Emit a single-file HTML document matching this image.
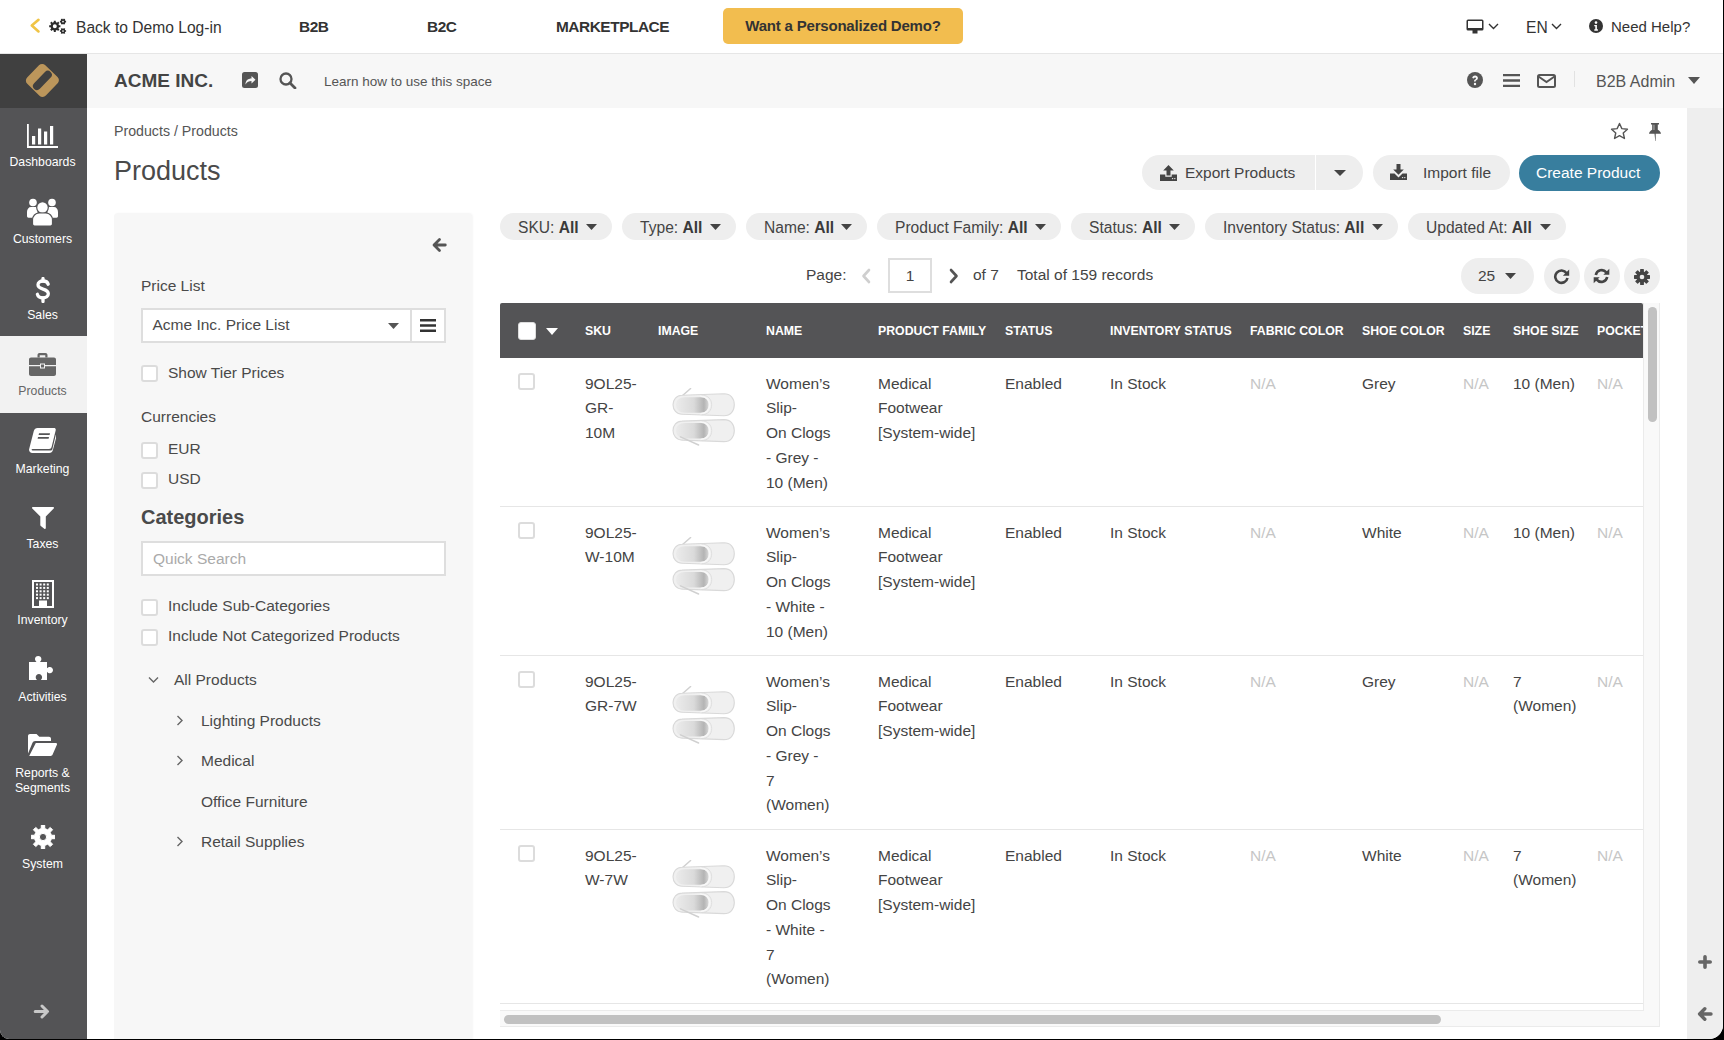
<!DOCTYPE html>
<html><head><meta charset="utf-8">
<style>
*{box-sizing:border-box;margin:0;padding:0}
html,body{width:1724px;height:1040px;overflow:hidden;background:#000;font-family:"Liberation Sans",sans-serif;color:#444}
#win{position:absolute;left:0;top:0;width:1723px;height:1039px;background:#fff;overflow:hidden;border-bottom-left-radius:9px;border-bottom-right-radius:14px}
.a{position:absolute;white-space:nowrap}
/* top bar */
#top{position:absolute;left:0;top:0;width:1723px;height:54px;background:#fff;border-bottom:1px solid #e6e6e6}
.tb{font-size:15.6px;color:#333;top:19px;line-height:18px}
.tbb{font-weight:bold;font-size:15.4px;letter-spacing:-0.45px;top:18px}
#demo{left:723px;top:8px;width:240px;height:36px;background:#f2bd4f;border-radius:5px;font-weight:bold;font-size:15px;letter-spacing:-0.2px;color:#333;text-align:center;line-height:36px}
/* sidebar */
#side{position:absolute;left:0;top:54px;width:87px;height:985px;background:#545456}
#logo{position:absolute;left:0;top:0;width:87px;height:54px;background:#404040}
.si{position:absolute;left:0;width:87px;height:76px;color:#fff;text-align:center;font-size:12.25px}
.si .lb{position:absolute;left:-1px;width:87px;text-align:center;line-height:14px}
.si svg{position:absolute}
.si.act{background:#f2f2f2;color:#666}
/* header2 */
#hdr{position:absolute;left:87px;top:54px;width:1636px;height:54px;background:#f7f7f7}

.bt{font-size:15.5px;color:#444;line-height:18px}
.ft{font-size:15.5px;color:#4a4a4a;line-height:18px}
.cb{width:17px;height:17px;border:2px solid #dcdcdc;border-radius:3px;background:#fff}

.pill{top:213px;height:27px;border-radius:14px;background:#eeeeee;font-size:15.6px;color:#444;line-height:27px;padding-left:18px}
.pill span{position:absolute;left:18px;top:1px}
.pill svg{position:absolute;right:15px;top:11px}
.pill b{color:#3a3a3a}
.circ{top:258px;width:35.5px;height:35.5px;border-radius:50%;background:#eeeeee}

.th{top:21px;font-size:12.3px;font-weight:bold;color:#fff;line-height:14px}
.tr{left:0;width:1143px;border-bottom:1.5px solid #e6e6e6}
.td{top:13.5px;font-size:15.5px;line-height:24.75px;color:#444}
.na{color:#c6c6c6}
</style></head>
<body>
<div id="win"><svg width="0" height="0" style="position:absolute"><defs>
<linearGradient id="op" x1="0" y1="0" x2="1" y2="0"><stop offset="0" stop-color="#ebebeb"/><stop offset=".55" stop-color="#dadada"/><stop offset=".86" stop-color="#b4b4b4"/><stop offset="1" stop-color="#d6d6d6"/></linearGradient>
<filter id="bl" x="-10%" y="-10%" width="120%" height="120%"><feGaussianBlur stdDeviation="0.5"/></filter>
<g id="sh"><path d="M10 1.5L52 0c6.5 0 10.3 4.5 10.3 11S58.5 22 52 22L10 20.5C4.5 20.5 1 16 1 11S4.5 1.5 10 1.5z" fill="#f0f0f0" stroke="#d9d9d9" stroke-width="1.1"/><path d="M4 11c0-4.5 3.5-7.5 9-7.5h16c5 0 7.5 3.5 7.5 7.5 0 4.5-2.5 8-7.5 8H13c-5.5 0-9-3.5-9-8z" fill="url(#op)"/><path d="M28.5 2.5c5.7 0 9.2 3.8 9.2 8.5s-3.5 8.9-9.2 8.9" fill="none" stroke="#f8f8f8" stroke-width="1.5"/><path d="M29.5 1.2c6.5 0 10.2 4.4 10.2 9.8s-3.7 10-10.2 10" fill="none" stroke="#dadada" stroke-width=".8"/></g>
<g id="shoes" filter="url(#bl)"><path d="M5.8 11.8L18.6 .5" stroke="#d0d0d0" stroke-width="1.5" stroke-linecap="round"/><use href="#sh" x="0" y="5.8"/><use href="#sh" x="0" y="31.6"/><path d="M8.5 48.9L26.6 57" stroke="#d0d0d0" stroke-width="1.5" stroke-linecap="round"/></g>
</defs></svg>
<div id="top">
  <svg class="a" style="left:29px;top:17px" width="12" height="17" viewBox="0 0 12 17"><path d="M9.5 2.8L2.8 8.6l6.7 5.8" fill="none" stroke="#f0c445" stroke-width="2.6" stroke-linecap="round" stroke-linejoin="round"/></svg>
  <svg class="a" style="left:49px;top:18px" width="18" height="17" viewBox="0 0 18 17"><path fill-rule="evenodd" fill="#2b2b2b" d="M9.99 7.31 L11.41 7.30 L11.41 9.30 L9.99 9.29 L9.46 10.56 L10.48 11.56 L9.06 12.98 L8.06 11.96 L6.79 12.49 L6.80 13.91 L4.80 13.91 L4.81 12.49 L3.54 11.96 L2.54 12.98 L1.12 11.56 L2.14 10.56 L1.61 9.29 L0.19 9.30 L0.19 7.30 L1.61 7.31 L2.14 6.04 L1.12 5.04 L2.54 3.62 L3.54 4.64 L4.81 4.11 L4.80 2.69 L6.80 2.69 L6.79 4.11 L8.06 4.64 L9.06 3.62 L10.48 5.04 L9.46 6.04ZM7.80 8.30A2.0 2.0 0 1 0 3.80 8.30A2.0 2.0 0 1 0 7.80 8.30ZM16.27 2.81 L17.09 2.77 L17.09 4.43 L16.27 4.39 L15.82 5.17 L16.26 5.86 L14.83 6.69 L14.45 5.96 L13.55 5.96 L13.17 6.69 L11.74 5.86 L12.18 5.17 L11.73 4.39 L10.91 4.43 L10.91 2.77 L11.73 2.81 L12.18 2.03 L11.74 1.34 L13.17 0.51 L13.55 1.24 L14.45 1.24 L14.83 0.51 L16.26 1.34 L15.82 2.03ZM14.85 3.60A0.85 0.85 0 1 0 13.15 3.60A0.85 0.85 0 1 0 14.85 3.60ZM16.27 12.21 L17.09 12.17 L17.09 13.83 L16.27 13.79 L15.82 14.57 L16.26 15.26 L14.83 16.09 L14.45 15.36 L13.55 15.36 L13.17 16.09 L11.74 15.26 L12.18 14.57 L11.73 13.79 L10.91 13.83 L10.91 12.17 L11.73 12.21 L12.18 11.43 L11.74 10.74 L13.17 9.91 L13.55 10.64 L14.45 10.64 L14.83 9.91 L16.26 10.74 L15.82 11.43ZM14.85 13.00A0.85 0.85 0 1 0 13.15 13.00A0.85 0.85 0 1 0 14.85 13.00Z"/></svg>
  <div class="a tb" style="left:76px">Back to Demo Log-in</div>
  <div class="a tb tbb" style="left:299px">B2B</div>
  <div class="a tb tbb" style="left:427px">B2C</div>
  <div class="a tb tbb" style="left:556px">MARKETPLACE</div>
  <div class="a" id="demo">Want a Personalized Demo?</div>
  <svg class="a" style="left:1466px;top:19px" width="18" height="15" viewBox="0 0 18 15"><rect x="0.5" y="0.5" width="17" height="11" rx="1.5" fill="#333"/><rect x="2" y="2" width="14" height="7" fill="#fff"/><rect x="6.5" y="11" width="5" height="3.5" fill="#333"/></svg>
  <svg class="a" style="left:1488px;top:23px" width="11" height="7" viewBox="0 0 11 7"><path d="M1 1l4.5 4.5L10 1" fill="none" stroke="#333" stroke-width="1.4"/></svg>
  <div class="a tb" style="left:1526px">EN</div>
  <svg class="a" style="left:1551px;top:23px" width="11" height="7" viewBox="0 0 11 7"><path d="M1 1l4.5 4.5L10 1" fill="none" stroke="#333" stroke-width="1.4"/></svg>
  <svg class="a" style="left:1589px;top:19px" width="14" height="14" viewBox="0 0 14 14"><circle cx="7" cy="7" r="7" fill="#333"/><circle cx="7" cy="3.6" r="1.3" fill="#fff"/><path d="M5.3 6h2.6v4.3h1v1.4H5.3v-1.4h1V7.3h-1z" fill="#fff"/></svg>
  <div class="a tb" style="left:1611px;font-size:15px;top:18px">Need Help?</div>
</div>

<div id="side">
  <div id="logo">
    <svg class="a" style="left:20px;top:4px" width="46" height="46" viewBox="0 0 46 46"><g transform="rotate(44 22.4 22.4)"><rect x="9.4" y="9.4" width="26" height="26" rx="4.5" fill="#bc965b"/><rect x="18.4" y="10.6" width="8" height="23.6" rx="4" fill="#404040"/></g></svg>
  </div>
  <div class="si" style="top:54px">
    <svg style="left:27px;top:16px" width="31" height="24" viewBox="0 0 31 24"><g fill="#fff"><rect x="0" y="0" width="1.8" height="24"/><rect x="0" y="22" width="31" height="2"/><rect x="5" y="12" width="3.2" height="8.5"/><rect x="11" y="4.5" width="3.2" height="16"/><rect x="17" y="7.5" width="3.2" height="13"/><rect x="23" y="2" width="3.2" height="18.5"/></g></svg>
    <div class="lb" style="top:47px">Dashboards</div>
  </div>
  <div class="si" style="top:130px">
    <svg style="left:27px;top:14px" width="31" height="28" viewBox="0 0 31 28"><g fill="#fff"><circle cx="6" cy="4.5" r="3.8"/><circle cx="25" cy="4.5" r="3.8"/><path d="M0 14c0-3 1.8-5 4-5h4c1 0 2 .5 2.5 1.2v9.5H1.5C.6 19.7 0 19 0 18z"/><path d="M31 14c0-3-1.8-5-4-5h-4c-1 0-2 .5-2.5 1.2v9.5h9c.9 0 1.5-.7 1.5-1.7z"/><circle cx="15.5" cy="9.5" r="5.8" fill="#fff" stroke="#545456" stroke-width="1.2"/><path d="M5.5 26v-4c0-4 3-7 6.5-7h7c3.5 0 6.5 3 6.5 7v4c0 1-.8 2-2 2h-16c-1.2 0-2-1-2-2z" stroke="#545456" stroke-width="1.2"/></g></svg>
    <div class="lb" style="top:48px">Customers</div>
  </div>
  <div class="si" style="top:206px">
    <svg style="left:35px;top:17px" width="16" height="26" viewBox="0 0 16 26"><g fill="none" stroke="#fff" stroke-width="3.3" stroke-linecap="round"><path d="M13.2 7.2C12.6 5 10.6 4 8 4 5.1 4 3 5.5 3 7.8c0 2.6 2.3 3.5 5 4.3 3 .9 5.3 1.8 5.3 4.7 0 2.5-2.2 4-5.3 4-2.9 0-5-1.2-5.6-3.5"/><path d="M8 1.5v2.5M8 21v3.5"/></g></svg>
    <div class="lb" style="top:48px">Sales</div>
  </div>
  <div class="si act" style="top:282px;height:77px">
    <svg style="left:29px;top:17px" width="27" height="23" viewBox="0 0 27 23"><g fill="#666"><path d="M8.5 4.5V2c0-1.1.9-2 2-2h6c1.1 0 2 .9 2 2v2.5h-2.2V2.2h-5.6v2.3z"/><path d="M0 6.5c0-1.1.9-2 2-2h23c1.1 0 2 .9 2 2v5.5H16v-1.5h-5V12H0z"/><path d="M0 13.2h11v2.3h5v-2.3h11V21c0 1.1-.9 2-2 2H2c-1.1 0-2-.9-2-2z"/><rect x="12" y="11.5" width="3" height="3"/></g></svg>
    <div class="lb" style="top:48px">Products</div>
  </div>
  <div class="si" style="top:359px">
    <svg style="left:29px;top:15px" width="27" height="25" viewBox="0 0 27 25"><path fill="#fff" fill-rule="evenodd" d="M8.5 0H25c1.3 0 2 .9 1.7 2.2L22.6 19c-.3 1.2-1.3 2-2.5 2H3.5c-1 0-1.2.9-.5 1.3.3.2.6.3 1 .3h17.5c.8 0 1.5-.5 1.8-1.2l3.5-14.5.9.6L23.9 22c-.4 1.8-1.9 3-3.7 3H3.2C1.3 25-.3 23.4.1 21.2L4.8 3C5.3 1.2 6.8 0 8.5 0zM10 5.3l-.4 1.6h11l.4-1.6zm-1 3.8l-.4 1.6h11l.4-1.6z"/></svg>
    <div class="lb" style="top:49px">Marketing</div>
  </div>
  <div class="si" style="top:435px">
    <svg style="left:32px;top:18px" width="22" height="22" viewBox="0 0 22 22"><path d="M1 0h20c.9 0 1.3 1 .7 1.6L13.8 9.6V21c0 .8-.9 1.2-1.5.7l-3.5-2.8c-.3-.2-.5-.6-.5-1V9.6L.3 1.6C-.3 1 .1 0 1 0z" fill="#fff"/></svg>
    <div class="lb" style="top:48px">Taxes</div>
  </div>
  <div class="si" style="top:511px">
    <svg style="left:32px;top:15px" width="22" height="28" viewBox="0 0 22 28"><g fill="#fff"><path fill-rule="evenodd" d="M0 0h22v28H0zM2 2v24h18V2z"/><rect x="4.0" y="3.5" width="2" height="2"/><rect x="7.6" y="3.5" width="2" height="2"/><rect x="11.2" y="3.5" width="2" height="2"/><rect x="14.8" y="3.5" width="2" height="2"/><rect x="4.0" y="6.9" width="2" height="2"/><rect x="7.6" y="6.9" width="2" height="2"/><rect x="11.2" y="6.9" width="2" height="2"/><rect x="14.8" y="6.9" width="2" height="2"/><rect x="4.0" y="10.3" width="2" height="2"/><rect x="7.6" y="10.3" width="2" height="2"/><rect x="11.2" y="10.3" width="2" height="2"/><rect x="14.8" y="10.3" width="2" height="2"/><rect x="4.0" y="13.7" width="2" height="2"/><rect x="7.6" y="13.7" width="2" height="2"/><rect x="11.2" y="13.7" width="2" height="2"/><rect x="14.8" y="13.7" width="2" height="2"/><rect x="4.0" y="17.1" width="2" height="2"/><rect x="7.6" y="17.1" width="2" height="2"/><rect x="11.2" y="17.1" width="2" height="2"/><rect x="14.8" y="17.1" width="2" height="2"/><rect x="7" y="20.5" width="8" height="6"/></g></svg>
    <div class="lb" style="top:48px">Inventory</div>
  </div>
  <div class="si" style="top:588px">
    <svg style="left:29px;top:14px" width="27" height="24" viewBox="0 0 27 24"><path fill="#fff" d="M0 6h7.5c-1-.9-1.5-1.8-1.5-2.9C6 1.3 7.4 0 9.2 0s3.2 1.3 3.2 3.1c0 1.1-.5 2-1.5 2.9H18v6.3c.9-1 1.8-1.4 2.9-1.4 1.8 0 3.1 1.4 3.1 3.2s-1.3 3.2-3.1 3.2c-1.1 0-2-.5-2.9-1.5V24h-6.2c.9-.9 1.3-1.8 1.3-2.8 0-1.8-1.4-3.2-3.2-3.2S6.7 19.4 6.7 21.2c0 1 .4 1.9 1.3 2.8H0z"/></svg>
    <div class="lb" style="top:48px">Activities</div>
  </div>
  <div class="si" style="top:664px;height:91px">
    <svg style="left:28px;top:16px" width="29" height="22" viewBox="0 0 29 22"><g fill="#fff"><path d="M0 2C0 .9.9 0 2 0h6.5l2.8 2.8H21c1.1 0 2 .9 2 2V7H7.2c-1.3 0-2.4.8-2.8 2L0 19.5z"/><path d="M7.8 9H28c.8 0 1.3.8 1 1.5L24.5 20.8c-.3.7-1 1.2-1.8 1.2H1.2z"/></g></svg>
    <div class="lb" style="top:48px;line-height:15px">Reports &amp;<br>Segments</div>
  </div>
  <div class="si" style="top:755px">
    <svg style="left:31px;top:16px" width="24" height="24" viewBox="0 0 24 24"><path fill="#fff" fill-rule="evenodd" stroke="#fff" stroke-width="1" stroke-linejoin="round" d="M20.42 10.26 L23.88 10.31 L23.88 13.69 L20.42 13.74 L19.19 16.72 L21.60 19.21 L19.21 21.60 L16.72 19.19 L13.74 20.42 L13.69 23.88 L10.31 23.88 L10.26 20.42 L7.28 19.19 L4.79 21.60 L2.40 19.21 L4.81 16.72 L3.58 13.74 L0.12 13.69 L0.12 10.31 L3.58 10.26 L4.81 7.28 L2.40 4.79 L4.79 2.40 L7.28 4.81 L10.26 3.58 L10.31 0.12 L13.69 0.12 L13.74 3.58 L16.72 4.81 L19.21 2.40 L21.60 4.79 L19.19 7.28ZM15.60 12.00A3.6 3.6 0 1 0 8.40 12.00A3.6 3.6 0 1 0 15.60 12.00Z"/></svg>
    <div class="lb" style="top:48px">System</div>
  </div>
  <svg class="a" style="left:33px;top:949px" width="17" height="17" viewBox="0 0 17 17"><path d="M2.2 8.5h12M9 3l5.5 5.5L9 14" fill="none" stroke="#c8c8c8" stroke-width="3" stroke-linecap="round" stroke-linejoin="round"/></svg>
</div>

<div id="hdr">
  <div class="a" style="left:27px;top:16px;font-size:19px;font-weight:bold;color:#444;line-height:22px">ACME INC.</div>
  <svg class="a" style="left:155px;top:18px" width="16" height="16" viewBox="0 0 16 16"><rect x="0" y="0" width="16" height="16" rx="2.5" fill="#555"/><path d="M3.5 12.5c0-4 2.5-6 6-6V4l4 3.8-4 3.8V9c-2.5 0-4.5.8-6 3.5z" fill="#f7f7f7"/></svg>
  <svg class="a" style="left:192px;top:18px" width="18" height="17" viewBox="0 0 18 17"><circle cx="7" cy="7" r="5.5" fill="none" stroke="#555" stroke-width="2.3"/><path d="M11 11l5 5" stroke="#555" stroke-width="2.8" stroke-linecap="round"/></svg>
  
  <svg class="a" style="left:1380px;top:18px" width="16" height="16" viewBox="0 0 16 16"><circle cx="8" cy="8" r="8" fill="#555"/><path d="M5.3 6.1c0-1.6 1.2-2.6 2.8-2.6 1.6 0 2.8 1 2.8 2.4 0 1.3-.8 1.8-1.6 2.3-.5.3-.6.5-.6 1v.4H7V9.3c0-.9.4-1.4 1.1-1.8.6-.4.9-.6.9-1.2 0-.5-.4-.9-1-.9-.6 0-1 .4-1.1 1z" fill="#f7f7f7"/><circle cx="8" cy="12" r="1.2" fill="#f7f7f7"/></svg>
  <svg class="a" style="left:1416px;top:20px" width="17" height="13" viewBox="0 0 17 13"><path d="M0 1.2h17M0 6.5h17M0 11.8h17" stroke="#555" stroke-width="2.3"/></svg>
  <svg class="a" style="left:1450px;top:20px" width="19" height="14" viewBox="0 0 19 14"><rect x="1" y="1" width="17" height="12" rx="1.5" fill="none" stroke="#555" stroke-width="2"/><path d="M1.5 2.5l8 5.5 8-5.5" fill="none" stroke="#555" stroke-width="2"/></svg>
  <div class="a" style="left:1487px;top:17px;width:1px;height:16px;background:#e2e2e2"></div>
  <div class="a" style="left:1509px;top:19px;font-size:16px;color:#555;line-height:18px">B2B Admin</div>
  <svg class="a" style="left:1601px;top:23px" width="12" height="7" viewBox="0 0 12 7"><path d="M0 0h12L6 7z" fill="#555"/></svg>
<div class="a" style="left:237px;top:20px;font-size:13.5px;color:#555;line-height:16px">Learn how to use this space</div>
</div>

<div id="rpanel" class="a" style="left:1687px;top:108px;width:36px;height:931px;background:#eeeeee">
  <svg class="a" style="left:11px;top:847px" width="14" height="14" viewBox="0 0 14 14"><path d="M7 1.8v10.4M1.8 7h10.4" stroke="#666" stroke-width="3.6" stroke-linecap="round"/></svg>
  <svg class="a" style="left:10px;top:898px" width="16" height="16" viewBox="0 0 16 16"><path d="M14 8H3M7.8 2.8L2.6 8l5.2 5.2" fill="none" stroke="#666" stroke-width="3.4" stroke-linecap="round" stroke-linejoin="round"/></svg>
</div>
<div class="a" style="left:114px;top:123px;font-size:14.2px;color:#555;line-height:16px">Products / Products</div>
<div class="a" style="left:114px;top:155.5px;font-size:27px;color:#4a4a4a;line-height:30px">Products</div>
<svg class="a" style="left:1610px;top:122px" width="19" height="19" viewBox="0 0 19 19"><path d="M9.5 1.5l2.35 5.1 5.6.6-4.2 3.8 1.2 5.5-4.95-2.85-4.95 2.85 1.2-5.5-4.2-3.8 5.6-.6z" fill="none" stroke="#555" stroke-width="1.4" stroke-linejoin="round"/></svg>
<svg class="a" style="left:1648px;top:123px" width="14" height="18" viewBox="0 0 14 18"><path d="M3 0h8v1.6H9.8v5.2c1.8.8 3 2.2 3.2 4H7.7V18h-.4l-.8-7.2H1c.2-1.8 1.4-3.2 3.2-4V1.6H3z" fill="#555"/><path d="M5.4 1.8h1.1v5.2H5.4z" fill="#fff" opacity=".5"/></svg>

<div class="btn a" style="left:1142px;top:155px;width:221px;height:35px;border-radius:18px;background:#eeeeee"></div>
<div class="a" style="left:1315px;top:155px;width:1px;height:35px;background:#fff"></div>
<svg class="a" style="left:1160px;top:165px" width="17" height="16" viewBox="0 0 17 16"><path d="M8.5 0L3.2 5.4h3.3v5.2h4V5.4h3.3z" fill="#444"/><path d="M0 9.5h5.3v2.2h6.4V9.5H17V16H0z" fill="#444"/><circle cx="12.6" cy="13.6" r=".7" fill="#eee"/><circle cx="14.8" cy="13.6" r=".7" fill="#eee"/></svg>
<div class="a bt" style="left:1185px;top:164px">Export Products</div>
<svg class="a" style="left:1334px;top:170px" width="12" height="6" viewBox="0 0 12 6"><path d="M0 0h12L6 6z" fill="#444"/></svg>
<div class="btn a" style="left:1373px;top:155px;width:137px;height:35px;border-radius:18px;background:#eeeeee"></div>
<svg class="a" style="left:1390px;top:164px" width="17" height="16" viewBox="0 0 17 16"><path d="M6.5 0h4v5.4h3.3L8.5 10.8 3.2 5.4h3.3z" fill="#444"/><path d="M0 9.5h4.5l4 4 4-4H17V16H0z" fill="#444"/><circle cx="12.6" cy="13.6" r=".7" fill="#eee"/><circle cx="14.8" cy="13.6" r=".7" fill="#eee"/></svg>
<div class="a bt" style="left:1423px;top:164px">Import file</div>
<div class="a" style="left:1519px;top:155px;width:141px;height:35.5px;border-radius:18px;background:#387e9e"></div>
<div class="a bt" style="left:1536px;top:164px;color:#fff">Create Product</div>

<div id="fpanel" class="a" style="left:114px;top:213px;width:358px;height:830px;background:#f7f7f7;border-radius:4px 4px 0 0;box-shadow:1px 0 2px rgba(0,0,0,.04)">
  <svg class="a" style="left:318px;top:24px" width="15" height="16" viewBox="0 0 15 16"><path d="M13.3 8H2.5M7.5 2.5L2 8l5.5 5.5" fill="none" stroke="#555" stroke-width="2.8" stroke-linecap="round" stroke-linejoin="round"/></svg>
  <div class="a ft" style="left:27px;top:64px">Price List</div>
  <div class="a" style="left:27px;top:95px;width:305px;height:35px;background:#fff;border:2px solid #dedede"></div>
  <div class="a" style="left:296px;top:95px;width:2px;height:35px;background:#dedede"></div>
  <div class="a ft" style="left:38.5px;top:103px">Acme Inc. Price List</div>
  <svg class="a" style="left:274px;top:110px" width="11" height="6" viewBox="0 0 11 6"><path d="M0 0h11L5.5 6z" fill="#555"/></svg>
  <svg class="a" style="left:306px;top:106px" width="16" height="13" viewBox="0 0 16 13"><path d="M0 1.2h16M0 6.5h16M0 11.8h16" stroke="#333" stroke-width="2.4"/></svg>
  <div class="cb a" style="left:27px;top:152px"></div>
  <div class="a ft" style="left:54px;top:151px">Show Tier Prices</div>
  <div class="a ft" style="left:27px;top:195px">Currencies</div>
  <div class="cb a" style="left:27px;top:229px"></div>
  <div class="a ft" style="left:54px;top:227px">EUR</div>
  <div class="cb a" style="left:27px;top:259px"></div>
  <div class="a ft" style="left:54px;top:257px">USD</div>
  <div class="a" style="left:27px;top:292px;font-size:20px;font-weight:bold;color:#4a4a4a;line-height:24px">Categories</div>
  <div class="a" style="left:27px;top:328px;width:305px;height:35px;background:#fff;border:2px solid #dedede"></div>
  <div class="a ft" style="left:39px;top:337px;color:#aaa">Quick Search</div>
  <div class="cb a" style="left:27px;top:386px"></div>
  <div class="a ft" style="left:54px;top:384px">Include Sub-Categories</div>
  <div class="cb a" style="left:27px;top:416px"></div>
  <div class="a ft" style="left:54px;top:414px">Include Not Categorized Products</div>
  <svg class="a" style="left:34px;top:463px" width="11" height="8" viewBox="0 0 11 8"><path d="M1 1.5l4.5 4.5L10 1.5" fill="none" stroke="#666" stroke-width="1.4"/></svg>
  <div class="a ft" style="left:60px;top:458px">All Products</div>
  <svg class="a" style="left:62px;top:502px" width="8" height="11" viewBox="0 0 8 11"><path d="M1.5 1l4.5 4.5L1.5 10" fill="none" stroke="#666" stroke-width="1.4"/></svg>
  <div class="a ft" style="left:87px;top:499px">Lighting Products</div>
  <svg class="a" style="left:62px;top:542px" width="8" height="11" viewBox="0 0 8 11"><path d="M1.5 1l4.5 4.5L1.5 10" fill="none" stroke="#666" stroke-width="1.4"/></svg>
  <div class="a ft" style="left:87px;top:539px">Medical</div>
  <div class="a ft" style="left:87px;top:580px">Office Furniture</div>
  <svg class="a" style="left:62px;top:623px" width="8" height="11" viewBox="0 0 8 11"><path d="M1.5 1l4.5 4.5L1.5 10" fill="none" stroke="#666" stroke-width="1.4"/></svg>
  <div class="a ft" style="left:87px;top:620px">Retail Supplies</div>
</div>
<div class="pill a" style="left:500px;width:112px"><span>SKU: <b>All</b></span><svg width="11" height="6" viewBox="0 0 11 6"><path d="M0 0h11L5.5 6z" fill="#444"/></svg></div>
<div class="pill a" style="left:622px;width:114px"><span>Type: <b>All</b></span><svg width="11" height="6" viewBox="0 0 11 6"><path d="M0 0h11L5.5 6z" fill="#444"/></svg></div>
<div class="pill a" style="left:746px;width:121px"><span>Name: <b>All</b></span><svg width="11" height="6" viewBox="0 0 11 6"><path d="M0 0h11L5.5 6z" fill="#444"/></svg></div>
<div class="pill a" style="left:877px;width:184px"><span>Product Family: <b>All</b></span><svg width="11" height="6" viewBox="0 0 11 6"><path d="M0 0h11L5.5 6z" fill="#444"/></svg></div>
<div class="pill a" style="left:1071px;width:124px"><span>Status: <b>All</b></span><svg width="11" height="6" viewBox="0 0 11 6"><path d="M0 0h11L5.5 6z" fill="#444"/></svg></div>
<div class="pill a" style="left:1205px;width:193px"><span>Inventory Status: <b>All</b></span><svg width="11" height="6" viewBox="0 0 11 6"><path d="M0 0h11L5.5 6z" fill="#444"/></svg></div>
<div class="pill a" style="left:1408px;width:158px"><span>Updated At: <b>All</b></span><svg width="11" height="6" viewBox="0 0 11 6"><path d="M0 0h11L5.5 6z" fill="#444"/></svg></div>

<div class="a bt" style="left:806px;top:265.5px">Page:</div>
<svg class="a" style="left:860px;top:268px" width="12" height="16" viewBox="0 0 12 16"><path d="M9 2L3.5 8 9 14" fill="none" stroke="#cfcfcf" stroke-width="2.6" stroke-linecap="round" stroke-linejoin="round"/></svg>
<div class="a" style="left:888px;top:258px;width:44px;height:35px;border:2px solid #dedede;background:#fff;text-align:center;font-size:15.5px;line-height:31px;color:#444">1</div>
<svg class="a" style="left:948px;top:268px" width="12" height="16" viewBox="0 0 12 16"><path d="M3 2l5.5 6L3 14" fill="none" stroke="#555" stroke-width="2.6" stroke-linecap="round" stroke-linejoin="round"/></svg>
<div class="a bt" style="left:973px;top:265.5px">of 7</div>
<div class="a bt" style="left:1017px;top:266px">Total of 159 records</div>
<div class="a" style="left:1461px;top:258px;width:73px;height:35.5px;border-radius:18px;background:#eeeeee"></div>
<div class="a bt" style="left:1478px;top:267px">25</div>
<svg class="a" style="left:1505px;top:273px" width="11" height="6" viewBox="0 0 11 6"><path d="M0 0h11L5.5 6z" fill="#444"/></svg>
<div class="circ a" style="left:1544px"></div>
<div class="circ a" style="left:1584px"></div>
<div class="circ a" style="left:1624px"></div>
<svg class="a" style="left:1553px;top:268px" width="17" height="17" viewBox="0 0 17 17"><path d="M13.6 5.2A6.2 6.2 0 1 0 14.5 10" fill="none" stroke="#444" stroke-width="2.6"/><path d="M16.2 1.5v6.3H9.9z" fill="#444"/></svg>
<svg class="a" style="left:1593px;top:268px" width="17" height="16" viewBox="0 0 17 16"><path d="M2.8 7A6 6 0 0 1 13.3 4.3M14.2 9A6 6 0 0 1 3.7 11.7" fill="none" stroke="#444" stroke-width="2.6"/><path d="M16.3 0.7v6H10.3z" fill="#444"/><path d="M0.7 15.3v-6h6z" fill="#444"/></svg>
<svg class="a" style="left:1634px;top:269px" width="16" height="16" viewBox="-8 -8 16 16"><g fill="#444"><circle r="5.6"/><g id="gt"><rect x="-1.9" y="-8" width="3.8" height="4" rx=".6"/></g><use href="#gt" transform="rotate(45)"/><use href="#gt" transform="rotate(90)"/><use href="#gt" transform="rotate(135)"/><use href="#gt" transform="rotate(180)"/><use href="#gt" transform="rotate(225)"/><use href="#gt" transform="rotate(270)"/><use href="#gt" transform="rotate(315)"/></g><circle r="2.3" fill="#eee"/></svg>
<div id="grid" class="a" style="left:500px;top:303px;width:1160px;height:724px;overflow:hidden;background:#f9f9f9;border-right:1px solid #ebebeb;border-bottom:1px solid #ebebeb">
<div class="a" style="left:0;top:0;width:1144px;height:708px;background:#fff;border-right:1px solid #ebebeb;border-bottom:1px solid #ebebeb"></div>
<div class="a" style="left:1148px;top:4px;width:9px;height:115px;border-radius:5px;background:#c1c1c1"></div>
<div class="a" style="left:3.5px;top:712px;width:937px;height:9px;border-radius:5px;background:#c1c1c1"></div>
<div id="thd" class="a" style="left:0;top:0;width:1143px;height:55px;background:#545456;border-radius:2px 2px 0 0;overflow:hidden">
<div class="a" style="left:18px;top:19px;width:18px;height:18px;border-radius:3px;background:#fff;border:1px solid #ddd"></div>
<svg class="a" style="left:46px;top:25px" width="12" height="7" viewBox="0 0 12 7"><path d="M0 0h12L6 7z" fill="#fff"/></svg>
<div class="th a" style="left:85px">SKU</div>
<div class="th a" style="left:158px">IMAGE</div>
<div class="th a" style="left:266px">NAME</div>
<div class="th a" style="left:378px">PRODUCT FAMILY</div>
<div class="th a" style="left:505px">STATUS</div>
<div class="th a" style="left:610px">INVENTORY STATUS</div>
<div class="th a" style="left:750px">FABRIC COLOR</div>
<div class="th a" style="left:862px">SHOE COLOR</div>
<div class="th a" style="left:963px">SIZE</div>
<div class="th a" style="left:1013px">SHOE SIZE</div>
<div class="th a" style="left:1097px">POCKET</div>
</div>
<div class="tr a" style="top:55px;height:149px">
<div class="cb a" style="left:18px;top:15px"></div>
<div class="td a" style="left:85px">9OL25-<br>GR-<br>10M</div>
<svg class="a" style="left:172px;top:30px" width="63" height="59" viewBox="0 0 63 59"><use href="#shoes"/></svg>
<div class="td a" style="left:266px">Women’s<br>Slip-<br>On Clogs<br>- Grey -<br>10 (Men)</div>
<div class="td a" style="left:378px">Medical<br>Footwear<br>[System-wide]</div>
<div class="td a" style="left:505px">Enabled</div>
<div class="td a" style="left:610px">In Stock</div>
<div class="td na a" style="left:750px">N/A</div>
<div class="td a" style="left:862px">Grey</div>
<div class="td na a" style="left:963px">N/A</div>
<div class="td a" style="left:1013px">10 (Men)</div>
<div class="td na a" style="left:1097px">N/A</div>
</div>
<div class="tr a" style="top:204px;height:149px">
<div class="cb a" style="left:18px;top:15px"></div>
<div class="td a" style="left:85px">9OL25-<br>W-10M</div>
<svg class="a" style="left:172px;top:30px" width="63" height="59" viewBox="0 0 63 59"><use href="#shoes"/></svg>
<div class="td a" style="left:266px">Women’s<br>Slip-<br>On Clogs<br>- White -<br>10 (Men)</div>
<div class="td a" style="left:378px">Medical<br>Footwear<br>[System-wide]</div>
<div class="td a" style="left:505px">Enabled</div>
<div class="td a" style="left:610px">In Stock</div>
<div class="td na a" style="left:750px">N/A</div>
<div class="td a" style="left:862px">White</div>
<div class="td na a" style="left:963px">N/A</div>
<div class="td a" style="left:1013px">10 (Men)</div>
<div class="td na a" style="left:1097px">N/A</div>
</div>
<div class="tr a" style="top:353px;height:174px">
<div class="cb a" style="left:18px;top:15px"></div>
<div class="td a" style="left:85px">9OL25-<br>GR-7W</div>
<svg class="a" style="left:172px;top:30px" width="63" height="59" viewBox="0 0 63 59"><use href="#shoes"/></svg>
<div class="td a" style="left:266px">Women’s<br>Slip-<br>On Clogs<br>- Grey -<br>7<br>(Women)</div>
<div class="td a" style="left:378px">Medical<br>Footwear<br>[System-wide]</div>
<div class="td a" style="left:505px">Enabled</div>
<div class="td a" style="left:610px">In Stock</div>
<div class="td na a" style="left:750px">N/A</div>
<div class="td a" style="left:862px">Grey</div>
<div class="td na a" style="left:963px">N/A</div>
<div class="td a" style="left:1013px">7<br>(Women)</div>
<div class="td na a" style="left:1097px">N/A</div>
</div>
<div class="tr a" style="top:527px;height:174px">
<div class="cb a" style="left:18px;top:15px"></div>
<div class="td a" style="left:85px">9OL25-<br>W-7W</div>
<svg class="a" style="left:172px;top:30px" width="63" height="59" viewBox="0 0 63 59"><use href="#shoes"/></svg>
<div class="td a" style="left:266px">Women’s<br>Slip-<br>On Clogs<br>- White -<br>7<br>(Women)</div>
<div class="td a" style="left:378px">Medical<br>Footwear<br>[System-wide]</div>
<div class="td a" style="left:505px">Enabled</div>
<div class="td a" style="left:610px">In Stock</div>
<div class="td na a" style="left:750px">N/A</div>
<div class="td a" style="left:862px">White</div>
<div class="td na a" style="left:963px">N/A</div>
<div class="td a" style="left:1013px">7<br>(Women)</div>
<div class="td na a" style="left:1097px">N/A</div>
</div>
</div>

</div>
</body></html>
